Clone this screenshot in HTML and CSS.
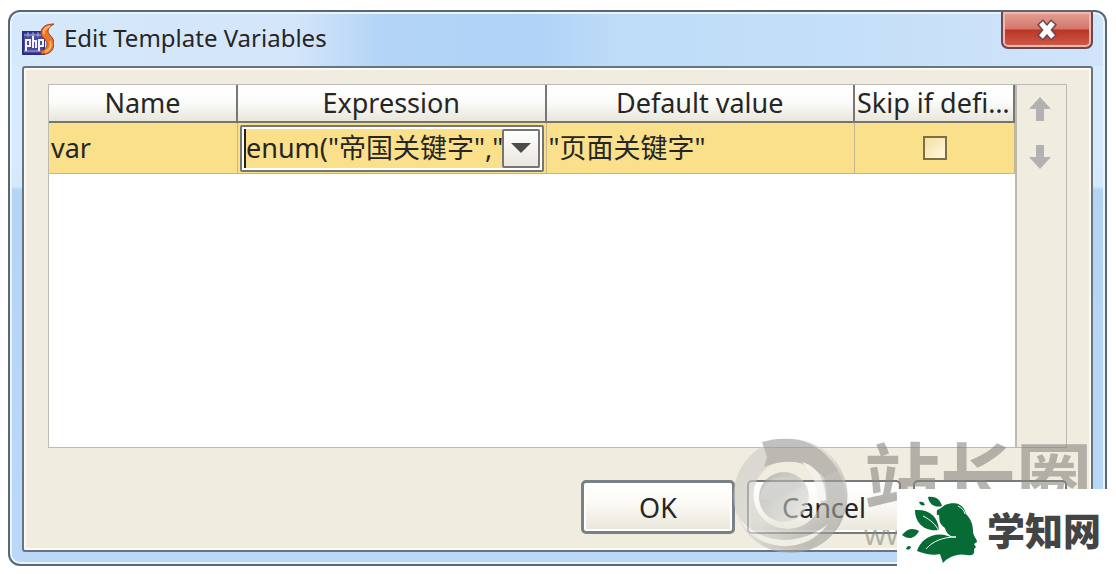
FILE: index.html
```html
<!doctype html>
<html lang="en">

<head>
  <meta charset="UTF-8" />
  <meta name="viewport" content="width=device-width, initial-scale=1.0" />
  <title>Edit Template Variables</title>
  <link rel="stylesheet" href="styles.css">
</head>

<body>
  <div class="window">
    <div class="title-bar">
      <svg class="app-icon" viewBox="0 0 32 32" aria-hidden="true">
        <rect x="1" y="9" width="21" height="22" fill="#4a4aa4" stroke="#2c2c80" stroke-width="2" />
        <path d="M2 12h18M6 9v5M11 9v5M16 9v5M2 28h18" stroke="#a9a9dc" stroke-width="1" />
        <path d="M4 28V17h4v6H4M11 13v12M11 18h3v7M17 28V17h4v6h-4" fill="none" stroke="#f2f2ff" stroke-width="2" />
        <path d="M32 1c-8 0-13 3-13 9 0 5 6 6 6 11 0 4-3 6-6 7v3h5c5-1 8-5 8-11 0-6-6-8-6-12 0-3 3-5 6-7z" fill="#ee7428" stroke="#93401e" stroke-width="1" />
        <path d="M28 3c-5 2-7 4-6 8M28 18c2 5 0 9-5 11" fill="none" stroke="#ffb36a" stroke-width="2" />
      </svg>
      <h1>Edit Template Variables</h1>
      <button class="close" type="button" aria-label="Close">
        <svg viewBox="0 0 24 22" aria-hidden="true">
          <path d="M5 3l14 16M19 3L5 19" stroke="#6b4550" stroke-width="8" />
          <path d="M6 4l12 14M18 4L6 18" stroke="#fff" stroke-width="5" />
        </svg>
      </button>
    </div>

    <div class="content">
      <div class="variables">
        <div class="table-area">
          <table>
            <colgroup>
              <col class="col-name">
              <col class="col-value">
              <col class="col-value">
              <col class="col-skip">
            </colgroup>
            <thead>
              <tr>
                <th>Name</th>
                <th>Expression</th>
                <th>Default value</th>
                <th class="skip">Skip if defined</th>
              </tr>
            </thead>
            <tbody>
              <tr>
                <td>var</td>
                <td class="editing">
                  <div class="combo">
                    <input type="text" aria-label="Expression" value='enum("帝国关键字","")'>
                    <button type="button" aria-label="Show expressions">
                      <svg viewBox="0 0 20 10" aria-hidden="true"><path d="M0 0h20L10 10z" fill="#4c4c4c" /></svg>
                    </button>
                  </div>
                </td>
                <td>"页面关键字"</td>
                <td class="check"><input type="checkbox" aria-label="Skip if defined"></td>
              </tr>
            </tbody>
          </table>
        </div>
        <div class="order">
          <button type="button" aria-label="Move up">
            <svg viewBox="0 0 22 24" aria-hidden="true"><path d="M11 0l11 12h-7v12H7V12H0z" fill="#b2b2b2" /></svg>
          </button>
          <button type="button" aria-label="Move down">
            <svg viewBox="0 0 22 24" aria-hidden="true"><path d="M11 24L0 12h7V0h8v12h7z" fill="#b2b2b2" /></svg>
          </button>
        </div>
      </div>

      <div class="actions">
        <button class="default" type="button">OK</button>
        <button type="button">Cancel</button>
        <button type="button" aria-label="Help"></button>
      </div>
    </div>
  </div>

  <div class="watermark">
    <svg viewBox="0 0 116 116" aria-hidden="true">
      <defs>
        <linearGradient id="ring" x1="0" y1="0" x2="1" y2="1">
          <stop offset="0" stop-color="#c9c8c4" />
          <stop offset="0.5" stop-color="#d2d1cd" />
          <stop offset="1" stop-color="#7c7b78" />
        </linearGradient>
        <linearGradient id="ball" x1="0" y1="0" x2="1" y2="1">
          <stop offset="0" stop-color="#969694" />
          <stop offset="1" stop-color="#e8e8e6" />
        </linearGradient>
      </defs>
      <path d="M58 1a57 57 0 1 0 1 0zM56 23a34 34 0 1 1-1 0z" fill="url(#ring)" fill-rule="evenodd" />
      <path d="M30 4c10-3 19-4 29-3 19 1 36 13 47 31L92 40C81 26 60 18 32 29l3-10z" fill="#989794" />
      <path d="M106 32c12 22 8 52-12 70-4 4-10 7-16 9 16-18 22-46 14-71z" fill="#a3a29f" />
      <path d="M70 24c13 3 24 17 24 38l-8 2c0-16-6-30-16-40z" fill="#f4f4f1" />
      <circle cx="52" cy="59" r="25" fill="url(#ball)" />
      <path d="M4 74c14 28 56 40 92 12-24 34-78 28-92-12z" fill="#f1f0ed" />
      <path d="M28 61c2-24 32-30 43-12-14 0-20 16-43 12z" fill="#b9b9b6" />
    </svg>
    <div class="watermark-text">
      <strong>站长圈</strong>
      <span>www.</span>
    </div>
  </div>

  <div class="site-badge">
    <svg viewBox="0 0 80 70" aria-hidden="true">
      <g fill="#076b35">
        <path d="M36 15c3-1 5-3 8-5 8-3 18-3 21 9 5 5 7 11 7 17 0 5 4 8 4 11l-3 2 2 3-2 2c1 6-2 7-7 6-10-2-19 2-24 8l-3-9c-6 2-15 0-23-3 4-13 18-21 36-14-5-2-7-5-8-9-6-5-9-10-8-18z" />
        <path d="M27 2c7-1 12 2 14 9-6 2-13-1-14-9z" />
        <path d="M14 15c14-1 23 6 24 20-12 2-24-5-24-20z" />
        <path d="M1 40c6-7 11-7 17-4-4 8-11 9-17 4z" />
        <path d="M18 7c3-1 5 0 6 3-3 1-5 0-6-3zM5 54c1-3 3-4 5-2-1 3-3 3-5 2z" />
      </g>
      <path d="M22 21c8 4 13 9 16 15l10 5c3 1 5 1 7 1-13 0-23 4-30 12M57 11c4 2 6 4 7 8" fill="none" stroke="#fff" stroke-width="1" />
      <path d="M37 20c0 9 3 15 9 20" fill="none" stroke="#fff" stroke-width="2" />
    </svg>
    <strong>学知网</strong>
  </div>
</body>

</html>
```
FILE: styles.css
```css
* {
  box-sizing: border-box;
}

body {
  display: flex;
  min-height: 100vh;
  margin: 0;
  padding: 10px 9px 8px 8px;
  position: relative;
  background: #fff;
  color: #262626;
  font-family: "Noto Sans", "Noto Sans CJK SC", sans-serif;
  font-size: 27px;
}

button,
input {
  margin: 0;
  padding: 0;
  color: inherit;
  font: inherit;
}

button svg {
  display: block;
}

.window {
  display: flex;
  flex: 1;
  flex-direction: column;
  min-width: 0;
  padding: 0 12px 12px;
  border: 2px solid #5a6873;
  border-radius: 12px;
  background:
    linear-gradient(90deg, #d6e9fb 0, #d3e6fa 26%, #b3d4f6 34%, #afd2f6 48%, #bddcf8 55%, #c4dff8 75%, #d0e4fa 100%) top / 100% 54px no-repeat,
    linear-gradient(#d9eafc 0, #d4eafb 174px, #b4d4f4 178px, #bad9f8 100%);
  box-shadow: inset 0 0 0 2px #e8f4ff;
}

.title-bar {
  display: flex;
  align-items: flex-start;
  height: 54px;
}

.app-icon {
  width: 32px;
  height: 32px;
  margin-top: 11px;
}

.title-bar h1 {
  flex: 1;
  margin: 9px 0 0 10px;
  font-size: 24px;
  font-weight: 400;
  line-height: 34px;
}

.close {
  display: flex;
  align-items: center;
  justify-content: center;
  width: 92px;
  height: 37px;
  border: 2px solid #6e4650;
  border-top: 0;
  border-radius: 0 0 7px 7px;
  background: linear-gradient(#e3a094 0, #d4776b 48%, #bb3526 52%, #cf5d4b 100%);
  box-shadow: inset 0 0 0 2px #efb9b0;
}

.close svg {
  width: 24px;
  height: 22px;
}

.content {
  display: flex;
  flex: 1;
  flex-direction: column;
  padding: 16px 24px 16px;
  border: 2px solid #66757f;
  border-radius: 3px;
  background: #f0ede0;
  box-shadow: inset 0 0 0 2px #fcfaf2;
}

.variables {
  display: flex;
  flex: 1;
  border: 1px solid #bcbab2;
}

.table-area {
  flex: 1;
  min-width: 0;
  border-right: 2px solid #bcbab2;
  background: #fff;
}

table {
  width: 100%;
  border-collapse: separate;
  border-spacing: 0;
  table-layout: fixed;
}

.col-name {
  width: 189px;
}

.col-skip {
  width: 160px;
}

th,
td {
  padding: 0 2px;
  overflow: hidden;
  white-space: nowrap;
}

th {
  height: 38px;
  border-right: 2px solid #777;
  border-bottom: 2px solid #77756a;
  background: linear-gradient(#fff 0, #fcfcfa 45%, #e8e6dc 100%);
  font-weight: 400;
  line-height: 34px;
}

.skip {
  text-overflow: ellipsis;
}

td {
  height: 51px;
  border-right: 1px solid #c4b68c;
  border-bottom: 1px solid #c4b68c;
  background: #fae08a;
  line-height: 40px;
}

.editing {
  padding: 1px 2px;
}

.combo {
  display: flex;
  height: 47px;
  padding: 2px;
  border: 2px solid #77756f;
  border-radius: 2px;
  background: #fae08a;
  box-shadow: inset 0 0 0 2px #fff;
}

.combo input {
  flex: 1;
  min-width: 0;
  border: 0;
  border-left: 2px solid #222;
  outline: 0;
  background: #fae08a;
}

.combo button {
  display: flex;
  align-items: center;
  justify-content: center;
  width: 38px;
  border: 2px solid #77756f;
  border-radius: 2px;
  background: linear-gradient(#fff, #e8e6de);
}

.combo button svg {
  width: 20px;
  height: 10px;
}

.check {
  text-align: center;
}

.check input {
  display: block;
  width: 24px;
  height: 24px;
  margin: 0 auto;
  appearance: none;
  border: 2px solid #7d6e45;
  background: linear-gradient(135deg, #f4dfa0, #fff8e0);
}

.order {
  display: flex;
  flex-direction: column;
  gap: 24px;
  align-items: center;
  width: 49px;
  padding: 12px 3px 0 0;
}

.order button {
  border: 0;
  background: none;
}

.order svg {
  width: 22px;
  height: 24px;
}

.actions {
  display: flex;
  gap: 12px;
  justify-content: flex-end;
  margin-top: 32px;
}

.actions button {
  width: 154px;
  height: 54px;
  border: 2px solid #77797a;
  border-radius: 5px;
  background: linear-gradient(#fff 0, #fbfaf6 40%, #e9e6d9 100%);
  box-shadow: inset 0 0 0 2px #fff;
}

.actions .default {
  border: 3px solid #778186;
}

.watermark {
  display: flex;
  gap: 16px;
  position: absolute;
  right: 24px;
  bottom: 20px;
  color: #888680;
  opacity: 0.6;
  pointer-events: none;
}

.watermark svg {
  width: 116px;
  height: 116px;
}

.watermark-text {
  display: flex;
  flex-direction: column;
  font-size: 28px;
  line-height: 32px;
}

.watermark-text strong {
  font-size: 76px;
  font-weight: 700;
  line-height: 80px;
}

.site-badge {
  display: flex;
  gap: 6px;
  align-items: center;
  position: absolute;
  right: 0;
  bottom: 4px;
  width: 219px;
  height: 81px;
  padding-left: 4px;
  background: #fff;
  color: #444;
}

.site-badge svg {
  width: 80px;
  height: 70px;
}

.site-badge strong {
  font-size: 38px;
  font-weight: 900;
  line-height: 48px;
}
```
